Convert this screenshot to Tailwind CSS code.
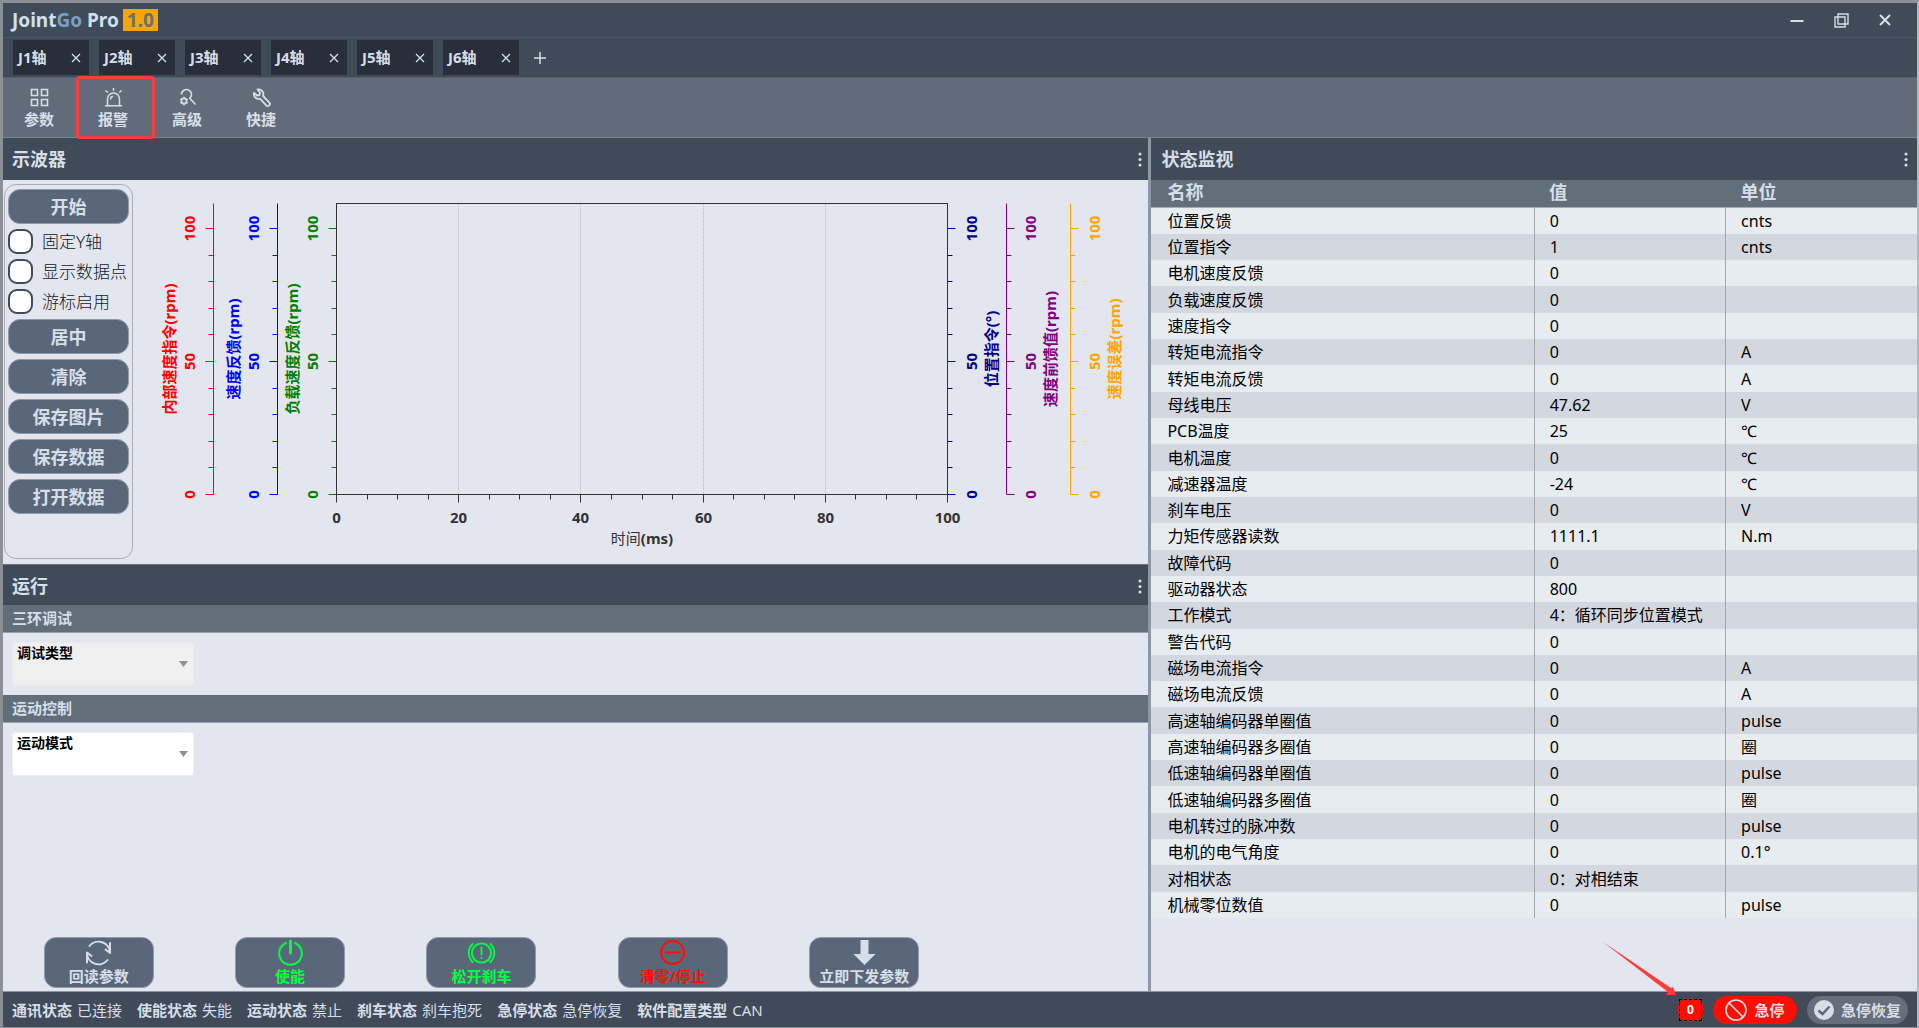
<!DOCTYPE html>
<html lang="zh-CN">

<head>
    <meta charset="UTF-8">
    <meta name="viewport" content="width=device-width, initial-scale=1.0">
    <title>JointGo Pro</title>
    <script src="https://cdn.jsdelivr.net/npm/@tailwindcss/browser@4"></script>
</head>

<body class="h-screen overflow-hidden flex flex-col bg-[#e3e6ee] border-x-[3px] border-t-[3px] border-b border-[#8b8f96] border-r-[#b4b8bf] border-r-2 font-['Noto_Sans','Noto_Sans_CJK_SC',sans-serif] text-[#d6dfe8]">
    <!-- Title bar -->
    <header class="h-[35px] shrink-0 flex items-center justify-between bg-[#3f4b58] border-b border-[#4a5866] pl-[9px] pr-[26px]">
        <h1 class="flex items-center gap-1 text-[19px] font-bold leading-none">
            <span class="text-[#d0e0ee]">Joint<span class="text-[#7a9ec4]">Go</span> Pro</span>
            <span class="h-[22px] leading-[22px] px-1 bg-[#f7a60a] text-[#6b6f75]">1.0</span>
        </h1>
        <div class="flex items-center gap-[30px]">
            <button type="button" aria-label="最小化">
                <svg class="size-[14px]" viewBox="0 0 14 14" fill="none" stroke="currentColor" stroke-width="2"><path d="M0.5 8H13.5" /></svg>
            </button>
            <button type="button" aria-label="还原">
                <svg class="size-[15px]" viewBox="0 0 15 15" fill="none" stroke="currentColor" stroke-width="1.4"><path d="M1 4H11V14H1ZM4 1H14V11H4Z" /></svg>
            </button>
            <button type="button" aria-label="关闭">
                <svg class="size-[12px]" viewBox="0 0 12 12" fill="none" stroke="currentColor" stroke-width="2"><path d="M1 1L11 11M11 1L1 11" /></svg>
            </button>
        </div>
    </header>

    <!-- Axis tabs -->
    <nav id="axisTabs" class="h-10 shrink-0 flex items-center gap-[10px] bg-[#3f4b58] border-b border-[#55606d] px-[10px]">
        <button type="button" id="addTab" aria-label="新建" class="order-last ml-1">
            <svg class="size-[14px]" viewBox="0 0 14 14" fill="none" stroke="currentColor" stroke-width="1.5"><path d="M7 1V13M1 7H13" /></svg>
        </button>
    </nav>

    <!-- Toolbar -->
    <div class="h-[60px] shrink-0 flex items-stretch bg-[#626b7a] border-b border-[#7a8390] text-[15px] leading-5 font-bold">
        <button type="button" class="w-[74px] pr-0.5 pt-px flex flex-col items-center justify-center gap-[2px]">
            <svg class="size-[19px]" viewBox="0 0 19 19" fill="none" stroke="currentColor" stroke-width="1.6"><path d="M1.5 1.5H7.5V7.5H1.5ZM11.5 1.5H17.5V7.5H11.5ZM1.5 11.5H7.5V17.5H1.5ZM11.5 11.5H17.5V17.5H11.5Z" /></svg>
            参数
        </button>
        <button type="button" class="w-[74px] pr-0.5 pt-px relative flex flex-col items-center justify-center gap-[2px]">
            <svg class="size-[19px]" viewBox="0 0 19 19" fill="none" stroke="currentColor" stroke-width="1.5"><path d="M3.5 17V11A6 6 0 0 1 15.500 11V17M1 17.800H18M6.500 11.500A3.200 3.200 0 0 1 9 8.300M9.500 0V2.800M1.500 2.500L3.800 4.500M17.500 2.500L15.200 4.500" /></svg>
            报警
            <span class="absolute -inset-y-[2px] -left-px w-[79px] border-[3px] border-[#f73e3e] rounded"></span>
        </button>
        <button type="button" class="w-[74px] pr-0.5 pt-px flex flex-col items-center justify-center gap-[2px]">
            <svg class="size-[19px]" viewBox="0 0 19 19" fill="none" stroke="currentColor" stroke-width="1.6"><path d="M3.500 6.500A5 5 0 1 1 11.500 10.500M11.500 10L17.500 16.500" /><circle cx="6" cy="13" r="2.600" /><path d="M6 8.800V10.500M6 15.500V17.200M2.400 10.900L3.800 11.700M8.200 14.300L9.600 15.100M2.400 15.100L3.800 14.300M8.200 11.700L9.600 10.900" /></svg>
            高级
        </button>
        <button type="button" class="w-[74px] pr-0.5 pt-px flex flex-col items-center justify-center gap-[2px]">
            <svg class="size-[19px]" viewBox="0 0 19 19" fill="none" stroke="currentColor" stroke-width="1.8" stroke-linejoin="round"><path d="M5.500 1.500L8 4.500L7.500 7L5 7.500L2 4.800A4.800 4.800 0 0 0 8 10.700L14.200 17.300A2 2 0 0 0 17.200 14.300L11 8A4.800 4.800 0 0 0 5.500 1.500Z" /></svg>
            快捷
        </button>
    </div>

    <main class="flex-1 min-h-0 grid grid-cols-[3fr_2fr]">
        <div class="min-w-0 flex flex-col border-r-[3px] border-[#8f97a5]">
            <!-- Oscilloscope -->
            <section class="shrink-0">
                <div class="h-[42px] flex items-center justify-between bg-[#404b59] pl-[9px] pr-1.5">
                    <h2 class="text-lg font-bold">示波器</h2>
                    <button type="button" aria-label="更多"><svg class="w-1 h-[15px]" viewBox="0 0 4 15" fill="currentColor"><circle cx="2" cy="2" r="1.500" /><circle cx="2" cy="7.500" r="1.500" /><circle cx="2" cy="13" r="1.500" /></svg></button>
                </div>
                <div class="h-[384px] flex">
                    <div class="w-[129px] shrink-0 mt-1 ml-px mb-[5px] px-[3px] py-1 flex flex-col gap-[5px] border border-[#aaacb0] rounded-xl text-lg leading-none">
                        <button type="button" class="h-[35px] shrink-0 rounded-xl border border-[#8f9bab] bg-[#5a677a] font-bold">开始</button>
                        <label class="h-[25px] flex items-center gap-[9px] whitespace-nowrap text-[17px] font-light text-[#111827]"><input type="checkbox" class="appearance-none size-[25px] shrink-0 rounded-[9px] border-2 border-[#3f4b58] bg-white">固定Y轴</label>
                        <label class="h-[25px] flex items-center gap-[9px] whitespace-nowrap text-[17px] font-light text-[#111827]"><input type="checkbox" class="appearance-none size-[25px] shrink-0 rounded-[9px] border-2 border-[#3f4b58] bg-white">显示数据点</label>
                        <label class="h-[25px] flex items-center gap-[9px] whitespace-nowrap text-[17px] font-light text-[#111827]"><input type="checkbox" class="appearance-none size-[25px] shrink-0 rounded-[9px] border-2 border-[#3f4b58] bg-white">游标启用</label>
                        <button type="button" class="h-[35px] shrink-0 rounded-xl border border-[#8f9bab] bg-[#5a677a] font-bold">居中</button>
                        <button type="button" class="h-[35px] shrink-0 rounded-xl border border-[#8f9bab] bg-[#5a677a] font-bold">清除</button>
                        <button type="button" class="h-[35px] shrink-0 rounded-xl border border-[#8f9bab] bg-[#5a677a] font-bold">保存图片</button>
                        <button type="button" class="h-[35px] shrink-0 rounded-xl border border-[#8f9bab] bg-[#5a677a] font-bold">保存数据</button>
                        <button type="button" class="h-[35px] shrink-0 rounded-xl border border-[#8f9bab] bg-[#5a677a] font-bold">打开数据</button>
                    </div>
                    <svg id="scope" class="flex-1 min-w-0 h-full text-[15px] font-bold" viewBox="133 180 1015 384" preserveAspectRatio="xMinYMin meet"></svg>
                </div>
            </section>

            <!-- Run -->
            <section class="flex-1 min-h-0 flex flex-col">
                <div class="h-[41px] shrink-0 flex items-center justify-between bg-[#404b59] border-t border-[#6b7480] pt-0.5 pl-[9px] pr-1.5">
                    <h2 class="text-lg font-bold">运行</h2>
                    <button type="button" aria-label="更多"><svg class="w-1 h-[15px]" viewBox="0 0 4 15" fill="currentColor"><circle cx="2" cy="2" r="1.500" /><circle cx="2" cy="7.500" r="1.500" /><circle cx="2" cy="13" r="1.500" /></svg></button>
                </div>
                <h3 class="h-7 shrink-0 bg-[#636e7b] border-b border-[#98a2ae] px-[9px] text-[15px] leading-[27px] font-bold">三环调试</h3>
                <div class="h-[62px] shrink-0 px-[9px] py-[9px]">
                    <div class="relative w-[182px] h-11 rounded-sm bg-[#f0f0f0] text-black">
                        <label for="tuneType" class="absolute left-[5px] top-0 text-sm leading-[22px] font-bold">调试类型</label>
                        <select id="tuneType" disabled class="appearance-none size-full rounded-sm border border-[#e8eaee]"></select>
                        <svg class="absolute right-1.5 top-[19px] w-[9px] h-1.5 text-[#8e9199]" viewBox="0 0 9 6" fill="currentColor"><path d="M0 0H9L4.500 6Z" /></svg>
                    </div>
                </div>
                <h3 class="h-7 shrink-0 bg-[#636e7b] border-b border-[#98a2ae] px-[9px] text-[15px] leading-[27px] font-bold">运动控制</h3>
                <div class="flex-1 px-[9px] py-[9px]">
                    <div class="relative w-[182px] h-11 rounded-sm bg-white text-black">
                        <label for="motionMode" class="absolute left-[5px] top-0 text-sm leading-[22px] font-bold">运动模式</label>
                        <select id="motionMode" class="appearance-none size-full rounded-sm border border-[#eceef1]"></select>
                        <svg class="absolute right-1.5 top-[19px] w-[9px] h-1.5 text-[#8e9199]" viewBox="0 0 9 6" fill="currentColor"><path d="M0 0H9L4.500 6Z" /></svg>
                    </div>
                </div>
                <div class="shrink-0 -mr-[3px] grid grid-cols-6 justify-items-center pb-[3px] text-[15px] leading-5 font-bold">
                    <button type="button" class="w-[110px] h-[51px] pb-px flex flex-col items-center justify-center rounded-xl border border-[#8f9bab] bg-[#5a677a]">
                        <svg class="size-[27px]" viewBox="0 0 27 27" fill="none" stroke="currentColor" stroke-width="2" stroke-linecap="round"><path d="M4.500 7A11.500 11.500 0 0 1 25 14V4M25 14L20.500 10.500M22.500 21A11.500 11.500 0 0 1 2 13.500V23.500M2 13.500L6.500 17" /></svg>
                        回读参数
                    </button>
                    <button type="button" class="w-[110px] h-[51px] pb-px flex flex-col items-center justify-center rounded-xl border border-[#8f9bab] bg-[#5a677a] text-[#00ff40]">
                        <svg class="size-[27px]" viewBox="0 0 27 27" fill="none" stroke="currentColor" stroke-width="2" stroke-linecap="round"><path d="M13.500 2V14" stroke-width="3" /><path d="M9 4A11.300 11.300 0 1 0 18 4" /></svg>
                        使能
                    </button>
                    <button type="button" class="w-[110px] h-[51px] pb-px flex flex-col items-center justify-center rounded-xl border border-[#8f9bab] bg-[#5a677a] text-[#00ff40]">
                        <svg class="size-[27px]" viewBox="0 0 27 27" fill="none" stroke="currentColor" stroke-width="1.900" stroke-linecap="round"><circle cx="13.500" cy="14" r="9.600" /><path d="M4.500 5A12.600 12.600 0 0 0 4.500 23M22.500 5A12.600 12.600 0 0 1 22.500 23M13.500 8.500V15.500M13.500 18.800V19.300" /></svg>
                        松开刹车
                    </button>
                    <button type="button" class="w-[110px] h-[51px] pb-px flex flex-col items-center justify-center rounded-xl border border-[#8f9bab] bg-[#5a677a] text-[#ff0d00]">
                        <svg class="size-[27px]" viewBox="0 0 27 27" fill="none" stroke="currentColor" stroke-width="2" stroke-linecap="round"><circle cx="13.500" cy="13.500" r="11.500" /><path d="M6.500 13.500H20.500" /></svg>
                        清零/停止
                    </button>
                    <button type="button" class="w-[110px] h-[51px] pb-px flex flex-col items-center justify-center rounded-xl border border-[#8f9bab] bg-[#5a677a]">
                        <svg class="size-[27px]" viewBox="0 0 27 27" fill="currentColor"><path d="M9.500 1H17.500V15H24.500L13.500 26L2.500 15H9.500Z" /></svg>
                        立即下发参数
                    </button>
                </div>
            </section>
        </div>

        <!-- Status monitor -->
        <section class="min-w-0">
            <div class="h-[42px] flex items-center justify-between bg-[#404b59] pl-[10px] pr-[9px]">
                <h2 class="text-lg font-bold">状态监视</h2>
                <button type="button" aria-label="更多"><svg class="w-1 h-[15px]" viewBox="0 0 4 15" fill="currentColor"><circle cx="2" cy="2" r="1.500" /><circle cx="2" cy="7.500" r="1.500" /><circle cx="2" cy="13" r="1.500" /></svg></button>
            </div>
            <table class="w-full h-[738px] table-fixed text-left leading-6">
                <thead class="bg-[#636e7b] text-lg">
                    <tr class="h-[27px] border-b border-[#a3abb5]">
                        <th class="w-1/2 pl-4 pb-0.5 leading-[24px]">名称</th>
                        <th class="w-1/4 pl-[15px] pb-0.5 leading-[24px]">值</th>
                        <th class="w-1/4 pl-[15px] pb-0.5 leading-[24px]">单位</th>
                    </tr>
                </thead>
                <tbody id="statusRows" class="text-black"></tbody>
            </table>
        </section>
    </main>

    <!-- Status bar -->
    <footer class="relative h-9 shrink-0 flex items-center justify-between bg-[#414a59] border-t border-[#8d95a0] pl-[9px] pr-[9px] text-[15px] leading-5">
        <dl id="statusBar" class="flex gap-[15px]"></dl>
        <div class="flex items-center gap-[10px] font-bold">
            <button type="button" class="relative w-[25px] h-[22px] rounded-lg bg-[#ff0d00] text-xs font-bold text-white">
                0
                <span class="absolute inset-y-0 inset-x-px border border-dashed border-black"></span>
            </button>
            <button type="button" class="w-[84px] h-7 flex items-center justify-center gap-[7px] rounded-[14px] bg-[#ff0d00]">
                <svg class="size-[22px]" viewBox="0 0 22 22" fill="none" stroke="currentColor" stroke-width="1.600"><circle cx="11" cy="11" r="10" /><path d="M4 4L18 18" /></svg>
                急停
            </button>
            <button type="button" class="w-[101px] h-7 flex items-center justify-center gap-[7px] rounded-[14px] bg-[#666d7b]">
                <svg class="size-5 shrink-0" viewBox="0 0 20 20" fill="none"><circle cx="10" cy="10" r="10" fill="#d6dfe8" /><path d="M4.500 10.500L8.500 14L15.500 6.500" stroke="#5c6573" stroke-width="2.400" /></svg>
                急停恢复
            </button>
        </div>
        <svg class="absolute right-[239px] bottom-[31px] w-[76px] h-[54px]" viewBox="0 0 76 54" fill="#ff3b3b"><path d="M1 0L69 46L71 45L74 53L64 53L66 50Z" /></svg>
    </footer>

    <script>
        // Tabs
        const tabs = document.getElementById('axisTabs');
        for (let i = 1; i <= 6; i++) {
            tabs.insertAdjacentHTML('beforeend', `
                <div class="w-[76px] h-[35px] flex items-center justify-between bg-[#282e3a] pl-[5px] pr-2">
                    <a href="#j${i}" class="text-[15px] font-bold">J${i}轴</a>
                    <button type="button" aria-label="关闭 J${i}轴">
                        <svg class="size-[10px]" viewBox="0 0 10 10" fill="none" stroke="currentColor" stroke-width="1.300"><path d="M1 1L9 9M9 1L1 9" /></svg>
                    </button>
                </div>`);
        }

        // Status table
        const rows = [
            ['位置反馈', '0', 'cnts'], ['位置指令', '1', 'cnts'], ['电机速度反馈', '0', ''],
            ['负载速度反馈', '0', ''], ['速度指令', '0', ''], ['转矩电流指令', '0', 'A'],
            ['转矩电流反馈', '0', 'A'], ['母线电压', '47.62', 'V'], ['PCB温度', '25', '℃'],
            ['电机温度', '0', '℃'], ['减速器温度', '-24', '℃'], ['刹车电压', '0', 'V'],
            ['力矩传感器读数', '1111.1', 'N.m'], ['故障代码', '0', ''], ['驱动器状态', '800', ''],
            ['工作模式', '4：循环同步位置模式', ''], ['警告代码', '0', ''], ['磁场电流指令', '0', 'A'],
            ['磁场电流反馈', '0', 'A'], ['高速轴编码器单圈值', '0', 'pulse'], ['高速轴编码器多圈值', '0', '圈'],
            ['低速轴编码器单圈值', '0', 'pulse'], ['低速轴编码器多圈值', '0', '圈'], ['电机转过的脉冲数', '0', 'pulse'],
            ['电机的电气角度', '0', '0.1°'], ['对相状态', '0：对相结束', ''], ['机械零位数值', '0', 'pulse'],
        ];
        document.getElementById('statusRows').innerHTML = rows.map(([name, value, unit]) => `
            <tr class="bg-[#e7ecf0] even:bg-[#d3d8e0]">
                <td class="pl-4 border-r border-[#a5a7ab]">${name}</td>
                <td class="pl-[15px] border-r border-[#a5a7ab]">${value}</td>
                <td class="pl-[15px]">${unit}</td>
            </tr>`).join('');

        // Status bar
        const states = [['通讯状态', '已连接'], ['使能状态', '失能'], ['运动状态', '禁止'], ['刹车状态', '刹车抱死'], ['急停状态', '急停恢复'], ['软件配置类型', 'CAN']];
        document.getElementById('statusBar').innerHTML = states.map(([k, v]) =>
            `<div class="flex gap-[5px]"><dt class="font-bold">${k}</dt><dd>${v}</dd></div>`).join('');

        // Oscilloscope axes
        const left = 336.5, right = 947.5, top_ = 203.5, bottom = 494.5, y100 = 228.5;
        const line = (x1, y1, x2, y2, c, extra = '') =>
            `<path d="M${x1} ${y1}L${x2} ${y2}" stroke="${c}" ${extra}/>`;
        const text = (x, y, s, c, rotate) =>
            `<text x="${x}" y="${y}" fill="${c}" text-anchor="middle" dominant-baseline="central" ${rotate ? `transform="rotate(-90 ${x} ${y})"` : ''}>${s}</text>`;
        let out = '';
        for (let v = 20; v < 100; v += 20) {
            const x = Math.round(left + (right - left) * v / 100 - 0.5) + 0.5;
            out += line(x, top_, x, bottom, '#c9c9c9', 'stroke-dasharray="3 1"');
        }
        // x position, side of the ticks, colour, title, draw own line
        const axes = [
            [213.5, -1, '#ff0000', '内部速度指令(rpm)', true],
            [277.5, -1, '#0000ff', '速度反馈(rpm)', true],
            [336.5, -1, '#008000', '负载速度反馈(rpm)', false],
            [947.5, 1, '#00008b', '位置指令(°)', false],
            [1006.5, 1, '#800080', '速度前馈值(rpm)', true],
            [1070.5, 1, '#ffa500', '速度误差(rpm)', true],
        ];
        for (const [x, side, color, title, own] of axes) {
            if (own) out += line(x, top_, x, bottom, color);
            for (let v = 0; v <= 100; v += 10) {
                const y = Math.round(bottom - (bottom - y100) * v / 100 - 0.5) + 0.5;
                out += line(x, y, x + side * (v % 50 ? 5 : 8), y, color);
                if (v % 50 === 0) out += text(x + side * (side < 0 ? 25 : 23), y, v, color, true);
            }
            out += text(x + side * (side < 0 ? 45 : 43), 349, title, color, true);
        }
        out += `<rect x="${left}" y="${top_}" width="${right - left}" height="${bottom - top_}" fill="none" stroke="#333"/>`;
        for (let v = 0; v <= 100; v += 5) {
            const x = Math.round(left + (right - left) * v / 100 - 0.5) + 0.5;
            out += line(x, bottom, x, bottom + (v % 20 ? 5 : 8), '#333');
            if (v % 20 === 0) out += text(x, 517, v, '#333');
        }
        out += text(642, 538, '<tspan class="font-normal">时间</tspan>(ms)', '#333');
        document.getElementById('scope').innerHTML = out;
    </script>
</body>

</html>
